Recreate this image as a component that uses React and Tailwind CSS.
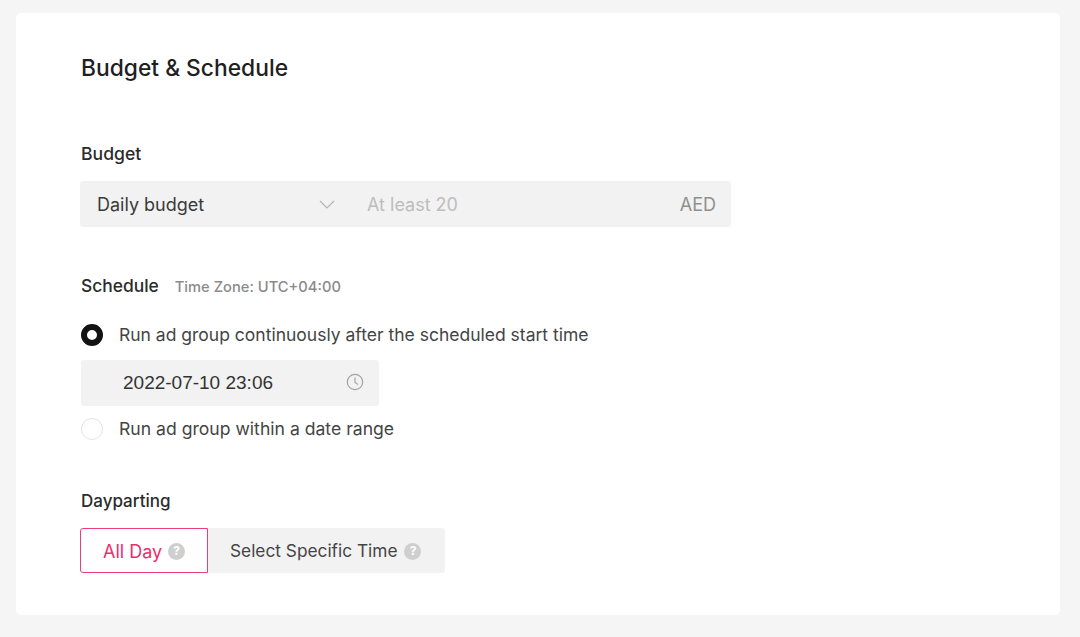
import React from 'react';

const Help = () => (
    <span className="w-[17px] h-[17px] rounded-full bg-[#cfcfcf] text-white text-[12px] font-bold flex items-center justify-center">?</span>
);

const App = () => {
    return (
        <div className="w-[1080px] h-[637px] bg-[#f5f5f5] pt-[13px] pl-4 font-['Inter',sans-serif] overflow-hidden">
            <div className="w-[1044px] h-[602px] bg-white rounded-[5px] pl-[64px] flex flex-col items-start">
                {/* Title */}
                <h1 className="mt-[40px] ml-px h-[30px] leading-[30px] text-[22.8px] font-medium text-[#1f1f1f]">Budget &amp; Schedule</h1>

                {/* Budget */}
                <div className="mt-[59px] ml-px h-6 leading-6 text-[17.6px] font-medium text-[#2b2b2b]">Budget</div>
                <div className="mt-[15px] w-[651px] h-[46px] bg-[#f2f2f2] rounded-[3px] flex items-center text-[18px]">
                    <span className="ml-[17px] w-[222px] text-[#3a3a3a]">Daily budget</span>
                    <svg width="16" height="9" viewBox="0 0 16 9" fill="none" stroke="#b5b5b5" strokeWidth="1.2">
                        <path d="M1 1l7 7 7-7" />
                    </svg>
                    <span className="ml-[32px] text-[#bdbdbd]">At least 20</span>
                    <span className="ml-auto mr-[15px] text-[#8f8f8f]">AED</span>
                </div>

                {/* Schedule */}
                <div className="mt-[46px] ml-px h-6 flex items-baseline gap-4">
                    <span className="text-[17.4px] font-medium text-[#2b2b2b]">Schedule</span>
                    <span className="text-[14.7px] font-medium text-[#8a8a8a]">Time Zone: UTC+04:00</span>
                </div>
                <div className="mt-[26px] ml-px h-[24px] flex items-center gap-[16px]">
                    <span className="w-[22px] h-[22px] rounded-full border-[6px] border-[#121212] bg-white"></span>
                    <span className="text-[17.5px] text-[#444]">Run ad group continuously after the scheduled start time</span>
                </div>
                <div className="mt-[13px] ml-px w-[298px] h-[46px] bg-[#f2f2f2] rounded-[3px] flex items-center">
                    <span className="ml-[42px] text-[19px] text-[#333] font-['Liberation_Sans',sans-serif]">2022-07-10 23:06</span>
                    <svg className="ml-auto mr-[15px] -mt-[2px]" width="18" height="18" viewBox="0 0 18 18" fill="none" stroke="#a3a3a3" strokeWidth="1.2">
                        <circle cx="9" cy="9" r="7.7" />
                        <path d="M9 4.5V9.5l3 2" />
                    </svg>
                </div>
                <div className="mt-[11px] ml-px h-[24px] flex items-center gap-[16px]">
                    <span className="w-[22px] h-[22px] rounded-full border border-[#e3e3e3] bg-white"></span>
                    <span className="text-[17.6px] text-[#444]">Run ad group within a date range</span>
                </div>

                {/* Dayparting */}
                <div className="mt-[48px] ml-px h-6 leading-6 text-[17px] font-medium text-[#2b2b2b]">Dayparting</div>
                <div className="mt-[15px] h-[45px] flex">
                    <div className="w-[128px] pt-px border border-[#ea3f77] rounded-l-[3px] flex items-center pl-[22px] gap-[6px] text-[18px] text-[#ea2e6d]">
                        All Day <Help />
                    </div>
                    <div className="w-[237px] pt-px bg-[#f2f2f2] rounded-r-[3px] flex items-center pl-[22px] gap-[7px] text-[17.3px] text-[#444]">
                        Select Specific Time <Help />
                    </div>
                </div>
            </div>
        </div>
    );
};

export default App;
